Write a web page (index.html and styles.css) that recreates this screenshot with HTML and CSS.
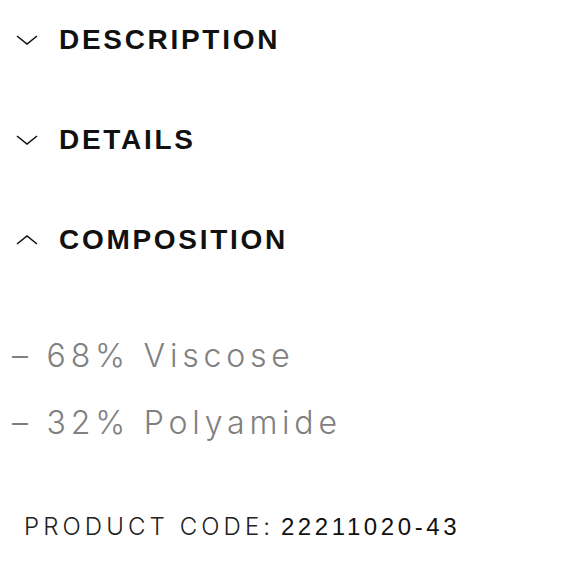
FILE: index.html
```html
<!DOCTYPE html>
<html lang="en">
<head>
<meta charset="utf-8">
<title>Product info</title>
<link rel="stylesheet" href="styles.css">
</head>
<body>
<div class="panel">
  <section class="acc">
    <div class="acc-head">
      <svg class="chev" viewBox="0 0 22 10" width="22" height="10"><path d="M1 1 L11 9 L21 1" fill="none" stroke="#111" stroke-width="1.6"/></svg>
      <h2 class="acc-title">DESCRIPTION</h2>
    </div>
  </section>
  <section class="acc">
    <div class="acc-head">
      <svg class="chev" viewBox="0 0 22 10" width="22" height="10"><path d="M1 1 L11 9 L21 1" fill="none" stroke="#111" stroke-width="1.6"/></svg>
      <h2 class="acc-title">DETAILS</h2>
    </div>
  </section>
  <section class="acc open">
    <div class="acc-head">
      <svg class="chev" viewBox="0 0 22 10" width="22" height="10"><path d="M1 9 L11 1 L21 9" fill="none" stroke="#111" stroke-width="1.6"/></svg>
      <h2 class="acc-title">COMPOSITION</h2>
    </div>
    <ul class="comp-list">
      <li>– 68% Viscose</li>
      <li>– 32% Polyamide</li>
    </ul>
  </section>
  <p class="code"><span class="code-label">PRODUCT CODE:</span> <span class="code-num">22211020-43</span></p>
</div>
</body>
</html>
```
FILE: styles.css
```css
html, body {
  margin: 0;
  padding: 0;
  background: #fff;
}
body {
  font-family: "Liberation Sans", Arial, sans-serif;
  color: #111;
}
.panel {
  display: flex;
  flex-direction: column;
}
.acc {
  display: flex;
  flex-direction: column;
  margin-bottom: 20px;
}
.acc-head {
  height: 80px;
  display: flex;
  align-items: center;
  gap: 21px;
  padding-left: 16px;
}
.chev {
  display: block;
  flex: none;
}
.acc-title {
  margin: 0;
  font-size: 28px;
  font-weight: 700;
  letter-spacing: 2.7px;
  line-height: 1;
  color: #111;
}
.comp-list {
  list-style: none;
  margin: 0;
  padding: 42px 0 0 12px;
}
.comp-list li {
  font-family: Inter, "Liberation Sans", sans-serif;
  font-weight: 300;
  font-size: 32px;
  line-height: 67px;
  letter-spacing: 4.8px;
  color: #808080;
}
.open {
  margin-bottom: 0;
}
.code {
  margin: 56px 0 0 24px;
  font-size: 24px;
  line-height: 30px;
}
.code-label {
  font-family: Inter, "Liberation Sans", sans-serif;
  font-weight: 300;
  font-size: 24px;
  letter-spacing: 4.1px;
  color: #222;
}
.code-num {
  color: #111;
  letter-spacing: 3.6px;
}
```
